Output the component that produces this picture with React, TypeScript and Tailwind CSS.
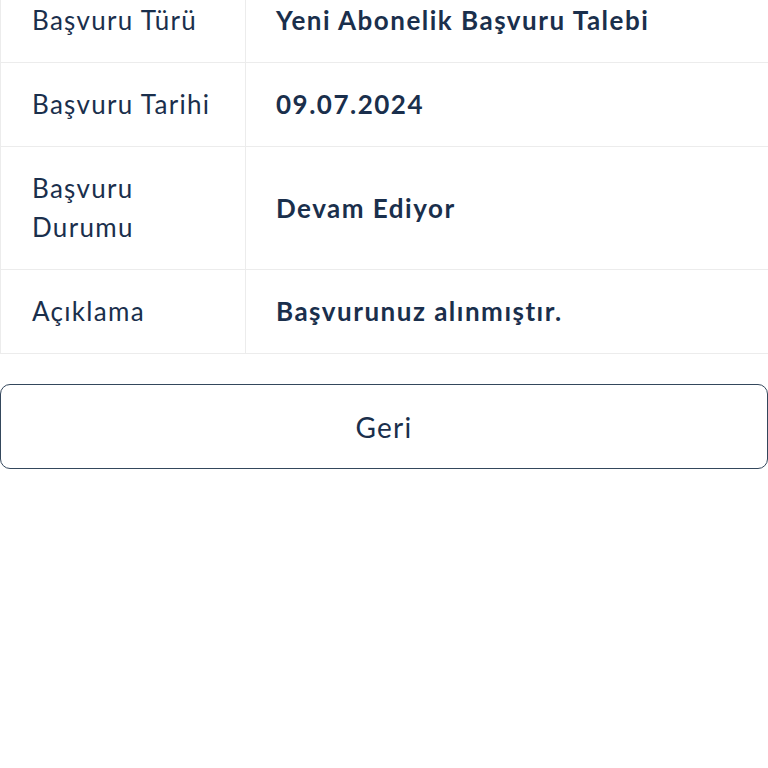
import React from "react";

const rows: { label: string[]; value: string }[] = [
  { label: ["Başvuru Türü"], value: "Yeni Abonelik Başvuru Talebi" },
  { label: ["Başvuru Tarihi"], value: "09.07.2024" },
  { label: ["Başvuru", "Durumu"], value: "Devam Ediyor" },
  { label: ["Açıklama"], value: "Başvurunuz alınmıştır." },
];

export default function App() {
  return (
    <div
      className="w-[768px] h-[768px] overflow-hidden bg-white text-[#1a2f4c]"
      style={{ fontFamily: "Lato, 'Noto Sans', sans-serif" }}
    >
      <div className="mt-[-21px] border-l border-[#ececec]">
        {rows.map((r, i) => (
          <div key={i} className="grid grid-cols-[245px_1fr] border-b border-[#ececec]">
            <div className="border-r border-[#ececec] pl-[31px] pr-4 py-[22px] text-[26px] leading-[39px] tracking-[1.3px]">
              {r.label.map((l, j) => (
                <div key={j}>{l}</div>
              ))}
            </div>
            <div className="flex items-center pl-[30px] pr-4 py-[22px] text-[26px] leading-[39px] font-bold tracking-[1.5px]">
              {r.value}
            </div>
          </div>
        ))}
      </div>
      <div className="mt-[30px]">
        <button className="w-full h-[85px] rounded-[10px] border-[1.5px] border-[#34475c] text-[28px] tracking-[1.3px] text-[#1a2f4c] bg-white">
          Geri
        </button>
      </div>
    </div>
  );
}
